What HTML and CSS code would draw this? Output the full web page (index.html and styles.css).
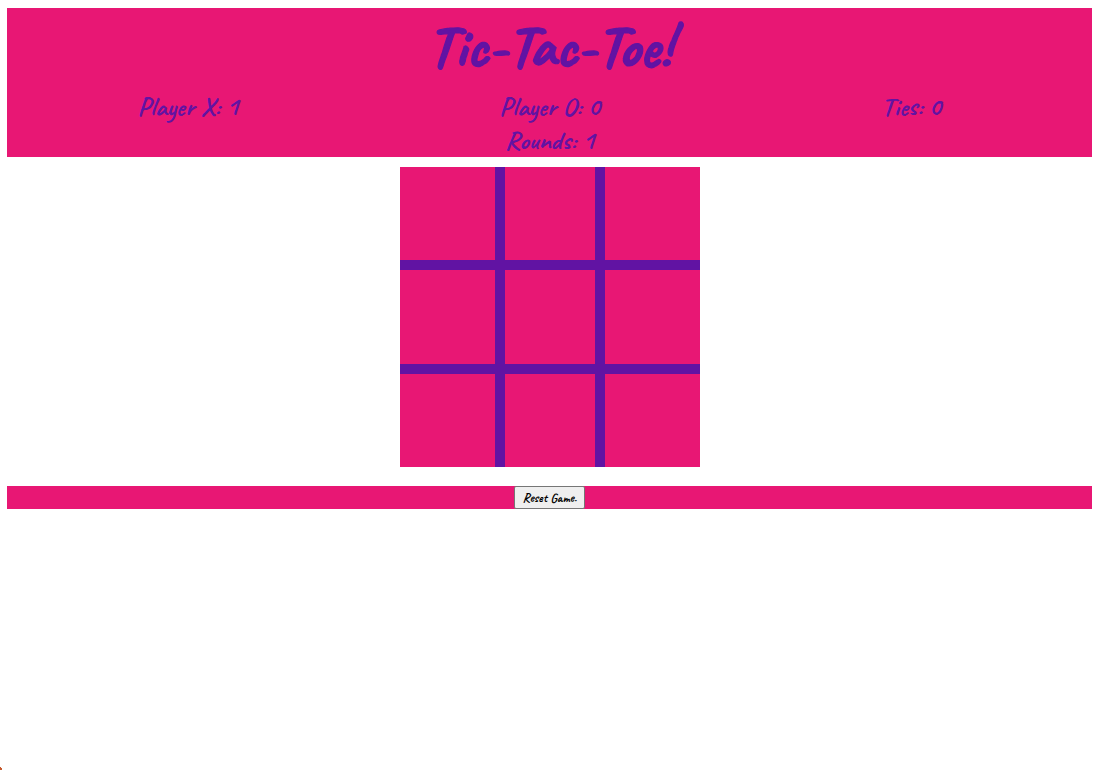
FILE: index.html
```html
<!DOCTYPE html>
<html lang="en">
<head>
<meta charset="utf-8">
<title>Tic-Tac-Toe!</title>
<link rel="stylesheet" href="styles.css">
</head>
<body>
<header class="header">
  <h1 class="title">Tic-Tac-Toe!</h1>
  <div class="scores">
    <div class="score">Player X: 1</div>
    <div class="score">Player O: 0</div>
    <div class="score">Ties: 0</div>
  </div>
  <div class="score">Rounds: 1</div>
</header>
<main class="board">
  <div class="cell"></div><div class="cell"></div><div class="cell"></div>
  <div class="cell"></div><div class="cell"></div><div class="cell"></div>
  <div class="cell"></div><div class="cell"></div><div class="cell"></div>
</main>
<footer class="footer"><button class="reset">Reset Game.</button></footer>
<svg class="corner" width="3" height="4" viewBox="0 0 3 4"><path d="M0 1h1v1h1v2H0z" fill="#c65a2e"/></svg>
</body>
</html>
```
FILE: styles.css
```css
body {
  margin: 8px 5px 0 7px;
  background: #fff;
  font-family: Caveat, "Caveat Brush", Lato, cursive;
}
.header {
  height: 149px;
  background: #e81774;
  color: #6113a3;
}
.title {
  margin: 0;
  height: 81px;
  font-size: 59.3px;
  font-weight: 700;
  -webkit-text-stroke: 1.2px #6113a3;
  line-height: 77px;
  text-align: center;
}
.scores {
  display: grid;
  grid-template-columns: repeat(3, 1fr);
}
.score {
  height: 34px;
  font-size: 26.6px;
  font-weight: 700;
  line-height: 34px;
  text-align: center;
}
.board {
  display: grid;
  grid-template-columns: 95px 90px 95px;
  grid-template-rows: 93px 94px 93px;
  gap: 10px;
  width: 300px;
  margin: 10px auto 19px 393px;
  background: #6113a3;
}
.cell {
  background: #e81774;
}
.footer {
  display: flex;
  justify-content: center;
  height: 23px;
  background: #e81774;
}
.reset {
  width: 71px;
  height: 23px;
  padding: 0;
  border: 1px solid #767676;
  border-radius: 2px;
  background: #efefef;
  color: #000;
  font: 700 13px/20px Caveat, "Caveat Brush", Lato, cursive;
  white-space: nowrap;
}
.corner {
  position: fixed;
  left: 0;
  bottom: 0;
}
```
